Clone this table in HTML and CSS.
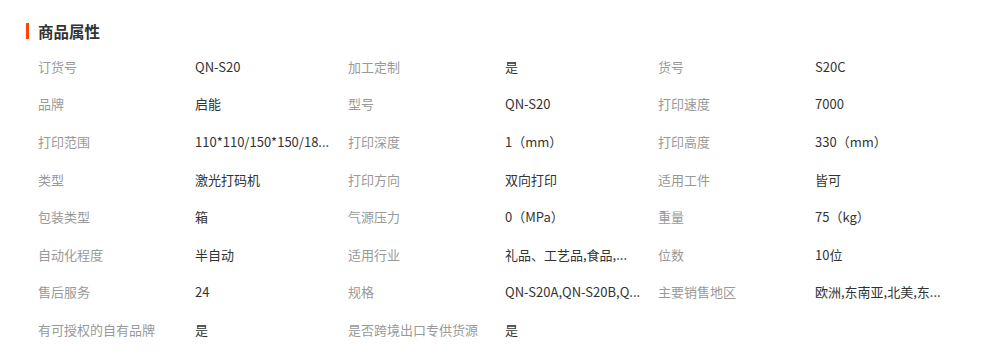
FILE: index.html
```html
<!DOCTYPE html>
<html lang="zh-CN">
<head>
<meta charset="utf-8">
<link rel="stylesheet" href="styles.css">
</head>
<body>
<div class="attrs">
  <h2 class="title">商品属性</h2>
  <div class="grid">
    <div class="k">订货号</div><div class="v">QN-S20</div>
    <div class="k">加工定制</div><div class="v">是</div>
    <div class="k">货号</div><div class="v">S20C</div>

    <div class="k">品牌</div><div class="v">启能</div>
    <div class="k">型号</div><div class="v">QN-S20</div>
    <div class="k">打印速度</div><div class="v">7000</div>

    <div class="k">打印范围</div><div class="v">110*110/150*150/18...</div>
    <div class="k">打印深度</div><div class="v">1（mm）</div>
    <div class="k">打印高度</div><div class="v">330（mm）</div>

    <div class="k">类型</div><div class="v">激光打码机</div>
    <div class="k">打印方向</div><div class="v">双向打印</div>
    <div class="k">适用工件</div><div class="v">皆可</div>

    <div class="k">包装类型</div><div class="v">箱</div>
    <div class="k">气源压力</div><div class="v">0（MPa）</div>
    <div class="k">重量</div><div class="v">75（kg）</div>

    <div class="k">自动化程度</div><div class="v">半自动</div>
    <div class="k">适用行业</div><div class="v">礼品、工艺品,食品,...</div>
    <div class="k">位数</div><div class="v">10位</div>

    <div class="k">售后服务</div><div class="v">24</div>
    <div class="k">规格</div><div class="v">QN-S20A,QN-S20B,Q...</div>
    <div class="k">主要销售地区</div><div class="v">欧洲,东南亚,北美,东...</div>

    <div class="k">有可授权的自有品牌</div><div class="v">是</div>
    <div class="k">是否跨境出口专供货源</div><div class="v">是</div>
  </div>
</div>
</body>
</html>
```

FILE: styles.css
```css
html, body {
  margin: 0;
  padding: 0;
  background: #fff;
}
body {
  font-family: "Noto Sans CJK SC", "Microsoft YaHei", sans-serif;
  font-size: 13px;
  color: #333;
}
.attrs {
  padding: 23px 0 0 26px;
}
.title {
  margin: 0;
  font-size: 15.5px;
  font-weight: bold;
  color: #333;
  line-height: 16px;
  height: 16px;
  border-left: 3px solid #ff4400;
  padding-left: 9px;
}
.grid {
  display: grid;
  grid-template-columns: 157px 153px 157px 153px 157px 153px;
  grid-auto-rows: 37.6px;
  margin-top: 9px;
  padding-left: 12px;
}
.k, .v {
  display: flex;
  align-items: center;
  white-space: nowrap;
  overflow: hidden;
  line-height: 16px;
}
.k {
  color: #999;
}
.v {
  color: #333;
}
```
